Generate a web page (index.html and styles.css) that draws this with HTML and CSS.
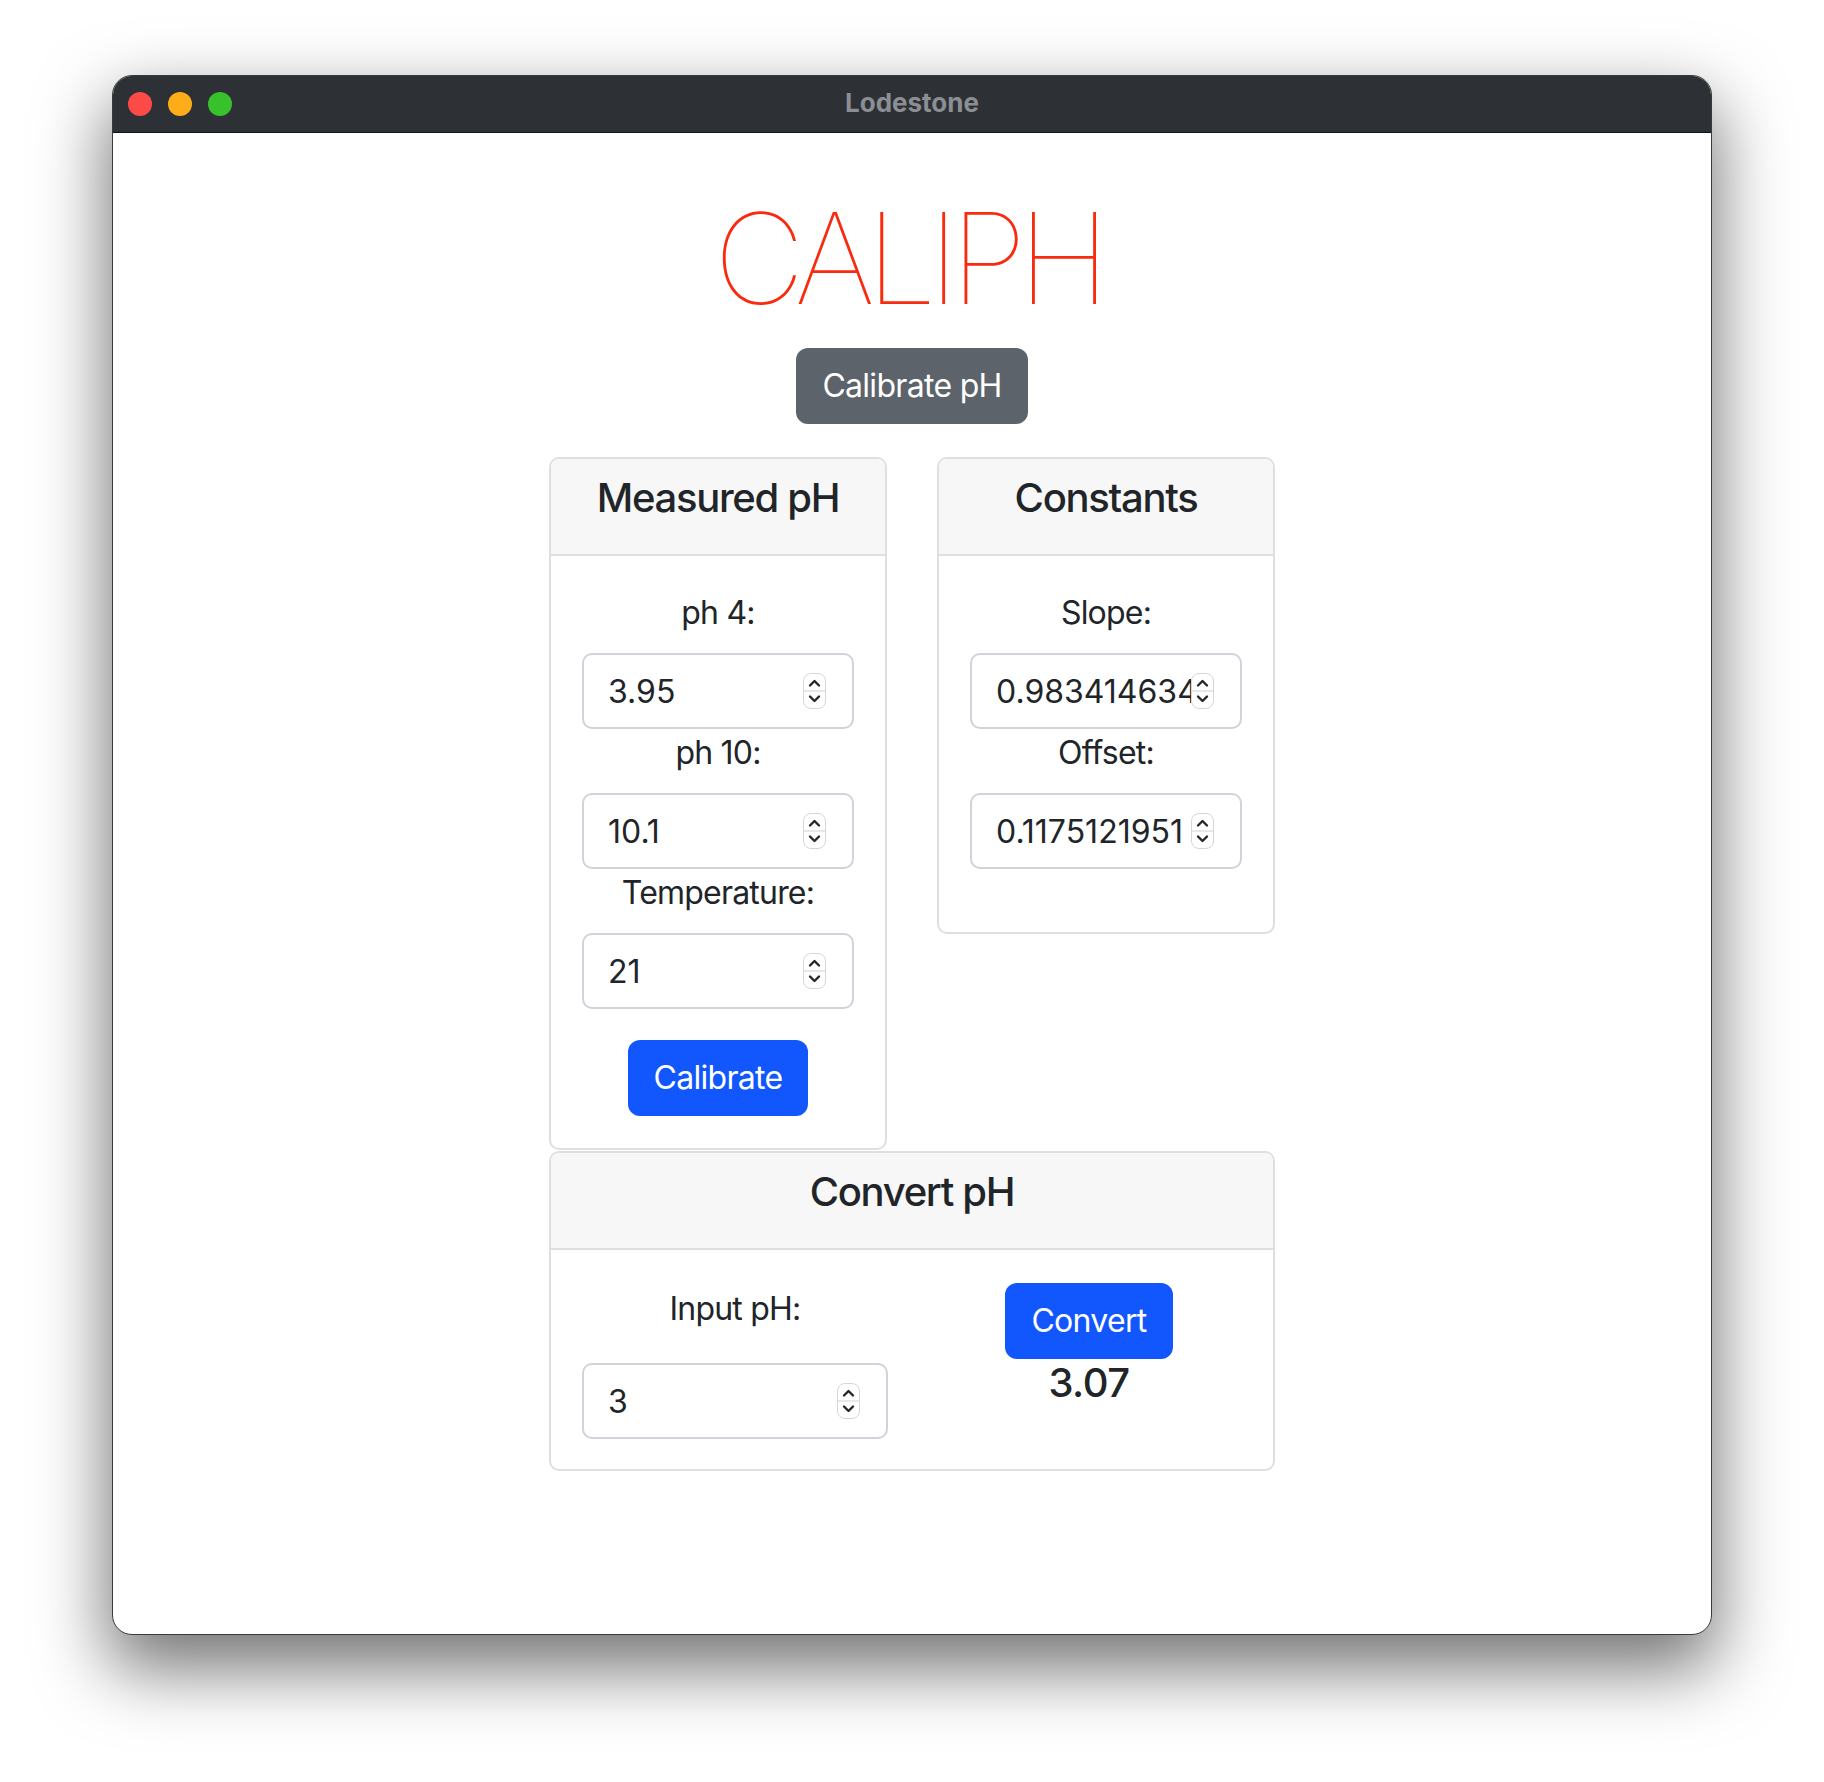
FILE: index.html
```html
<!DOCTYPE html>
<html lang="en">
<head>
<meta charset="utf-8">
<title>Lodestone</title>
<link rel="stylesheet" href="styles.css">
</head>
<body>
<div class="window">
  <div class="titlebar">
    <div class="lights">
      <span class="light red"></span>
      <span class="light yellow"></span>
      <span class="light green"></span>
    </div>
    <div class="title">Lodestone</div>
    <div></div>
  </div>
  <div class="content">
    <h1 class="logo">CALIPH</h1>
    <button class="btn btn-secondary">Calibrate pH</button>
    <div class="panels">
      <div class="row-top">
        <div class="card">
          <div class="card-header"><h5>Measured pH</h5></div>
          <div class="card-body card-body-measured">
            <label class="label">ph 4:</label>
            <div class="field"><input type="text" value="3.95"><svg class="spin" width="23" height="36" viewBox="0 0 23 36"><rect x="0.5" y="0.5" width="22" height="35" rx="7.5" fill="#fff" stroke="#d6d6d6"/><line x1="1" y1="18" x2="22" y2="18" stroke="#cfcfcf"/><path d="M7 12.5 L11.5 8 L16 12.5" fill="none" stroke="#262626" stroke-width="2.4" stroke-linecap="round" stroke-linejoin="round"/><path d="M7 23.5 L11.5 28 L16 23.5" fill="none" stroke="#262626" stroke-width="2.4" stroke-linecap="round" stroke-linejoin="round"/></svg></div>
            <label class="label">ph 10:</label>
            <div class="field"><input type="text" value="10.1"><svg class="spin" width="23" height="36" viewBox="0 0 23 36"><rect x="0.5" y="0.5" width="22" height="35" rx="7.5" fill="#fff" stroke="#d6d6d6"/><line x1="1" y1="18" x2="22" y2="18" stroke="#cfcfcf"/><path d="M7 12.5 L11.5 8 L16 12.5" fill="none" stroke="#262626" stroke-width="2.4" stroke-linecap="round" stroke-linejoin="round"/><path d="M7 23.5 L11.5 28 L16 23.5" fill="none" stroke="#262626" stroke-width="2.4" stroke-linecap="round" stroke-linejoin="round"/></svg></div>
            <label class="label">Temperature:</label>
            <div class="field"><input type="text" value="21"><svg class="spin" width="23" height="36" viewBox="0 0 23 36"><rect x="0.5" y="0.5" width="22" height="35" rx="7.5" fill="#fff" stroke="#d6d6d6"/><line x1="1" y1="18" x2="22" y2="18" stroke="#cfcfcf"/><path d="M7 12.5 L11.5 8 L16 12.5" fill="none" stroke="#262626" stroke-width="2.4" stroke-linecap="round" stroke-linejoin="round"/><path d="M7 23.5 L11.5 28 L16 23.5" fill="none" stroke="#262626" stroke-width="2.4" stroke-linecap="round" stroke-linejoin="round"/></svg></div>
            <button class="btn btn-primary btn-calibrate">Calibrate</button>
          </div>
        </div>
        <div class="card">
          <div class="card-header"><h5>Constants</h5></div>
          <div class="card-body card-body-constants">
            <label class="label">Slope:</label>
            <div class="field"><input type="text" value="0.9834146341"><svg class="spin" width="23" height="36" viewBox="0 0 23 36"><rect x="0.5" y="0.5" width="22" height="35" rx="7.5" fill="#fff" stroke="#d6d6d6"/><line x1="1" y1="18" x2="22" y2="18" stroke="#cfcfcf"/><path d="M7 12.5 L11.5 8 L16 12.5" fill="none" stroke="#262626" stroke-width="2.4" stroke-linecap="round" stroke-linejoin="round"/><path d="M7 23.5 L11.5 28 L16 23.5" fill="none" stroke="#262626" stroke-width="2.4" stroke-linecap="round" stroke-linejoin="round"/></svg></div>
            <label class="label">Offset:</label>
            <div class="field"><input type="text" value="0.1175121951"><svg class="spin" width="23" height="36" viewBox="0 0 23 36"><rect x="0.5" y="0.5" width="22" height="35" rx="7.5" fill="#fff" stroke="#d6d6d6"/><line x1="1" y1="18" x2="22" y2="18" stroke="#cfcfcf"/><path d="M7 12.5 L11.5 8 L16 12.5" fill="none" stroke="#262626" stroke-width="2.4" stroke-linecap="round" stroke-linejoin="round"/><path d="M7 23.5 L11.5 28 L16 23.5" fill="none" stroke="#262626" stroke-width="2.4" stroke-linecap="round" stroke-linejoin="round"/></svg></div>
          </div>
        </div>
      </div>
      <div class="card">
        <div class="card-header"><h5>Convert pH</h5></div>
        <div class="card-body convert-body">
          <div class="col">
            <label class="label label-input">Input pH:</label>
            <div class="field"><input type="text" value="3"><svg class="spin" width="23" height="36" viewBox="0 0 23 36"><rect x="0.5" y="0.5" width="22" height="35" rx="7.5" fill="#fff" stroke="#d6d6d6"/><line x1="1" y1="18" x2="22" y2="18" stroke="#cfcfcf"/><path d="M7 12.5 L11.5 8 L16 12.5" fill="none" stroke="#262626" stroke-width="2.4" stroke-linecap="round" stroke-linejoin="round"/><path d="M7 23.5 L11.5 28 L16 23.5" fill="none" stroke="#262626" stroke-width="2.4" stroke-linecap="round" stroke-linejoin="round"/></svg></div>
          </div>
          <div class="col col-result">
            <button class="btn btn-primary">Convert</button>
            <h5 class="result">3.07</h5>
          </div>
        </div>
      </div>
    </div>
  </div>
</div>
</body>
</html>
```

FILE: styles.css
```css
* { box-sizing: border-box; }

html, body {
  margin: 0;
}

body {
  width: 1824px;
  height: 1782px;
  overflow: hidden;
  background: #ffffff;
  padding: 75px 0 0 112px;
  font-family: "Inter", "Noto Sans", sans-serif;
  color: #212529;
}

.window {
  width: 1600px;
  height: 1560px;
  border: 1px solid #3a3a3a;
  border-radius: 20px;
  background: #ffffff;
  overflow: hidden;
  box-shadow: 0 30px 70px 4px rgba(0, 0, 0, 0.55);
}

.titlebar {
  height: 57px;
  background: #2d3034;
  border-bottom: 1px solid #111315;
  display: grid;
  grid-template-columns: 1fr auto 1fr;
  align-items: center;
}

.lights {
  display: flex;
  gap: 16px;
  padding-left: 15px;
}

.light {
  width: 24px;
  height: 24px;
  border-radius: 50%;
}
.red { background: #fc4a47; }
.yellow { background: #fdad1a; }
.green { background: #38c12d; }

.title {
  font-size: 26px;
  font-weight: 700;
  color: #8b8e92;
  margin-bottom: 4px;
}

.content {
  display: flex;
  flex-direction: column;
  align-items: center;
}

.logo {
  margin: 49px 9px 0 0;
  font-size: 126px;
  line-height: 152px;
  font-weight: 120;
  letter-spacing: -9px;
  color: #f92a0d;
}

.btn {
  font-family: inherit;
  font-size: 32px;
  line-height: 48px;
  letter-spacing: -0.7px;
  padding: 12px 24px;
  border: 2px solid transparent;
  border-radius: 12px;
  color: #ffffff;
}

.btn-secondary {
  background: #5c636a;
  margin-top: 14px;
}

.btn-primary {
  background: #1257fd;
}

.panels {
  width: 726px;
  margin-top: 33px;
  display: flex;
  flex-direction: column;
  gap: 1px;
}

.row-top {
  display: flex;
  justify-content: space-between;
  align-items: flex-start;
}

.card {
  border: 2px solid #dfdfdf;
  border-radius: 10px;
  overflow: hidden;
  background: #ffffff;
}

.row-top .card {
  width: 338px;
}

.card-header {
  background: #f7f7f7;
  border-bottom: 2px solid #dfdfdf;
  padding: 15px 16px 32px;
  text-align: center;
}

h5 {
  margin: 0;
  font-size: 40px;
  line-height: 48px;
  font-weight: 500;
  letter-spacing: -1.3px;
}

.card-body {
  padding: 33px 31px 32px;
  text-align: center;
}

.card-body-constants {
  padding-bottom: 63px;
}

.label {
  display: block;
  font-size: 32px;
  line-height: 48px;
  letter-spacing: -0.8px;
  margin-bottom: 16px;
}

.field {
  height: 76px;
  border: 2px solid #ced4da;
  border-radius: 10px;
  display: flex;
  align-items: center;
  padding: 0 26px 0 24px;
  background: #ffffff;
}

.field input {
  flex: 1;
  min-width: 0;
  border: 0;
  outline: 0;
  padding: 0;
  margin: 0;
  background: transparent;
  font-family: inherit;
  font-size: 32px;
  color: #212529;
}

.spin {
  flex: none;
  display: block;
}

.btn-calibrate {
  margin-top: 31px;
}

.convert-body {
  display: grid;
  grid-template-columns: minmax(0, 1fr) minmax(0, 1fr);
  column-gap: 48px;
  align-items: start;
  padding-bottom: 30px;
}

.col {
  display: flex;
  flex-direction: column;
  align-items: stretch;
  min-width: 0;
}

.label-input {
  margin-top: 2px;
  margin-bottom: 30px;
}

.col-result {
  align-items: center;
}

.result {
  margin: 0;
  letter-spacing: -0.5px;
}
```
